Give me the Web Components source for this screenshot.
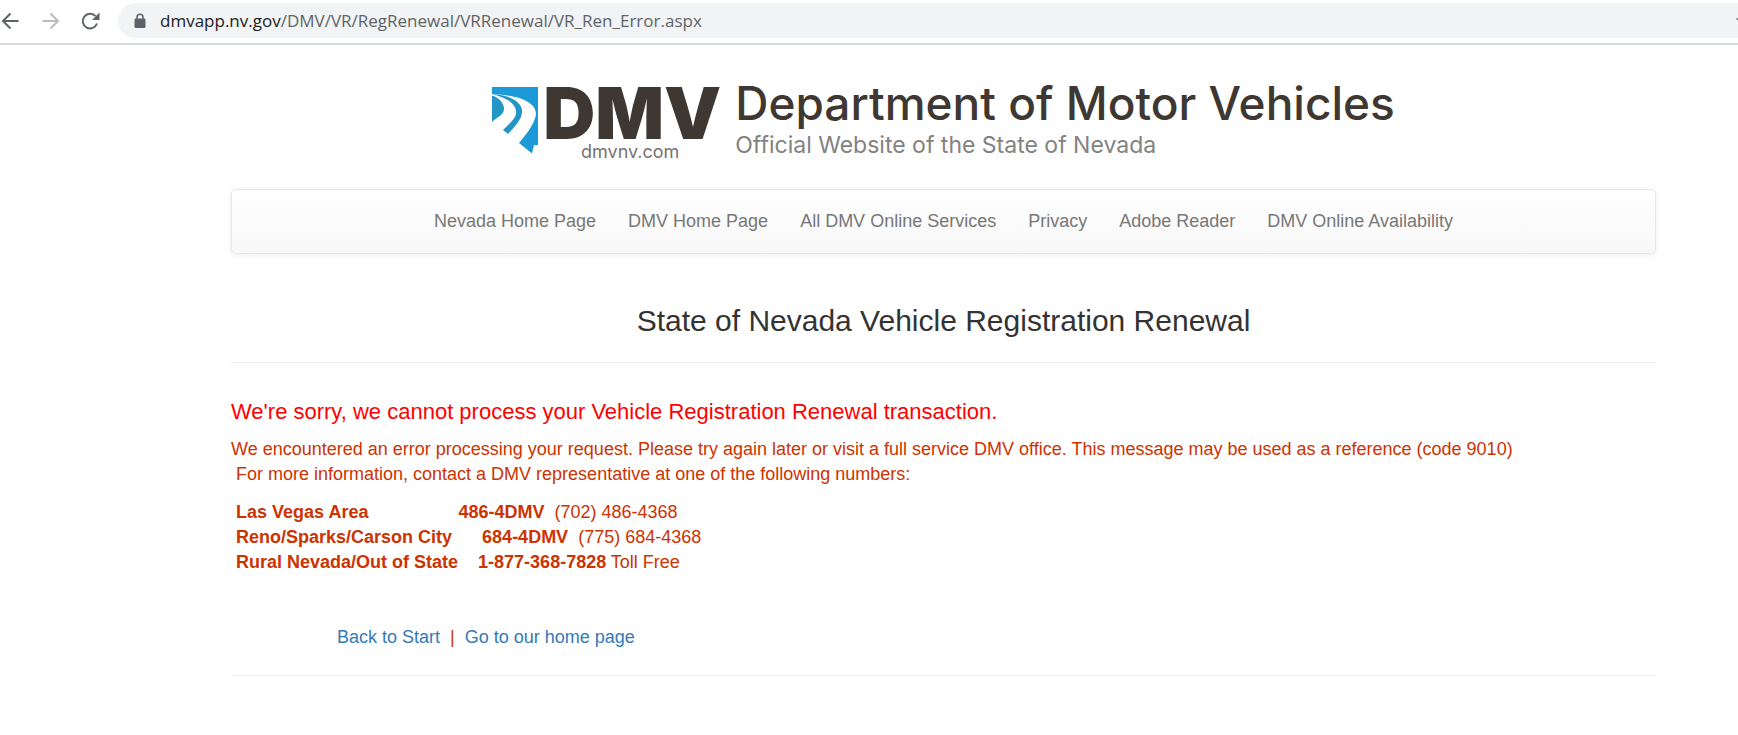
<!DOCTYPE html>
<html lang="en">
<head>
<meta charset="utf-8">
<meta name="viewport" content="width=device-width, initial-scale=1">
<title>State of Nevada Vehicle Registration Renewal</title>
<style>
* {
    box-sizing: border-box;
}

body {
    margin: 0;
    overflow-x: hidden;
    background: #fff;
    color: #333;
    font-family: "Liberation Sans", Arial, sans-serif;
    font-size: 18px;
    line-height: 25px;
}
</style>
</head>
<body>

<browser-bar host="dmvapp.nv.gov" path="/DMV/VR/RegRenewal/VRRenewal/VR_Ren_Error.aspx"></browser-bar>

<page-container>
    <site-brand></site-brand>

    <site-nav>
        <nav-link href="#nevada">Nevada Home Page</nav-link>
        <nav-link href="#dmv">DMV Home Page</nav-link>
        <nav-link href="#services">All DMV Online Services</nav-link>
        <nav-link href="#privacy">Privacy</nav-link>
        <nav-link href="#reader">Adobe Reader</nav-link>
        <nav-link href="#availability">DMV Online Availability</nav-link>
    </site-nav>

    <page-heading>State of Nevada Vehicle Registration Renewal</page-heading>

    <error-message>
        <span slot="title">We're sorry, we cannot process your Vehicle Registration Renewal transaction.</span>
        We encountered an error processing your request. Please try again later or visit a full service DMV office. This message may be used as a reference (code 9010)<br>&nbsp;For more information, contact a DMV representative at one of the following numbers:
    </error-message>

    <phone-list></phone-list>

    <page-links></page-links>
</page-container>

<script>
function define(name, html, setup) {
    const template = document.createElement('template');
    template.innerHTML = html;

    customElements.define(name, class extends HTMLElement {
        constructor() {
            super();
            this.attachShadow({ mode: 'open' });
            this.shadowRoot.appendChild(template.content.cloneNode(true));
        }

        connectedCallback() {
            if (setup) {
                setup(this, this.shadowRoot);
            }
        }
    });
}

define('browser-bar', `
<style>
:host {
    display: flex;
    align-items: center;
    height: 45px;
    padding: 0 0 2px;
    border-bottom: 2px solid #dadce0;
    box-sizing: border-box;
    overflow: hidden;
}

button {
    display: flex;
    flex: none;
    padding: 0;
    border: 0;
    background: none;
    color: #5f6368;
}

.controls {
    display: flex;
    flex: none;
    gap: 20px;
    width: 118px;
}

.forward {
    color: #babcbe;
}

.address {
    display: flex;
    flex: 1;
    align-items: center;
    min-width: 0;
    height: 35px;
    padding-left: 15px;
    border-radius: 18px 0 0 18px;
    background: #f1f3f4;
}

.url {
    flex: 1;
    padding-left: 13px;
    color: #5f6368;
    font: 17px/24px "Open Sans", sans-serif;
    white-space: nowrap;
}

.host {
    color: #202124;
}

.star {
    width: 2px;
    overflow: hidden;
}

svg {
    display: block;
    flex: none;
}
</style>

<div class="controls">
    <button aria-label="Back">
        <svg width="20" height="20" viewBox="0 0 20 20" fill="none" stroke="currentColor" stroke-width="2"><path d="M18.500 10H4M10.500 2.500 3 10l7.500 7.500"/></svg>
    </button>
    <button class="forward" aria-label="Forward">
        <svg width="20" height="20" viewBox="0 0 20 20" fill="none" stroke="currentColor" stroke-width="2"><path d="M2.500 10H18M10.500 2.500 18 10l-7.500 7.500"/></svg>
    </button>
    <button aria-label="Reload">
        <svg width="20" height="20" viewBox="0 0 20 20"><path d="M17 12.500A7.300 7.300 0 1 1 15.500 5.200" fill="none" stroke="currentColor" stroke-width="2"/><path d="M19.500 1.500V9H12z" fill="currentColor"/></svg>
    </button>
</div>
<div class="address">
    <svg width="14" height="16" viewBox="0 0 14 16" fill="#5f6368"><rect x="1.500" y="5.500" width="11" height="9.500" rx="1.200"/><path d="M4 6V4.200a3 3 0 0 1 6 0V6" fill="none" stroke="#5f6368" stroke-width="1.500"/></svg>
    <span class="url"><span class="host"></span><span class="path"></span></span>
    <button class="star" aria-label="Bookmark">
        <svg width="18" height="18" viewBox="0 0 18 18" fill="none" stroke="#5f6368" stroke-width="1.500"><path d="M9 1.500l2.200 5 5.300.500-4 3.600 1.200 5.400L9 13.200 4.300 16l1.200-5.400-4-3.600 5.300-.500z"/></svg>
    </button>
</div>
`, (host, root) => {
    root.querySelector('.host').textContent = host.getAttribute('host');
    root.querySelector('.path').textContent = host.getAttribute('path');
});

define('page-container', `
<style>
:host {
    display: block;
    margin: 0 82px 0 231px;
    padding-top: 34px;
}
</style>
<slot></slot>
`);

define('site-brand', `
<style>
:host {
    display: flex;
    justify-content: center;
    height: 110px;
    color: #3f3832;
    font-family: Inter, sans-serif;
    white-space: nowrap;
}

svg {
    display: block;
    flex: none;
    margin: 8px 5px 0 0;
}

.logo {
    margin-right: 14px;
    padding-top: 4px;
    text-align: center;
}

.name {
    font-size: 72px;
    font-weight: 900;
    line-height: 60px;
}

.site {
    padding-right: 4px;
    color: #77736f;
    font-size: 18px;
    line-height: 18px;
}

.department {
    font-size: 46px;
    font-weight: 500;
    line-height: 48px;
}

.official {
    color: #828282;
    font-size: 23px;
    line-height: 36px;
}
</style>

<svg width="46" height="67" viewBox="0 0 46 67">
    <path fill="#1c9ad8" d="M0 0h46v58h-4l-2 8.500L27 56C34 48 43 36 44 27 44 14 24 8 0 7z"/>
    <path fill="#2296c6" d="M0 7C17 8 29 14 30 23c1 9-8 17-14 24l-5-4c7-7 14-12 13-19C23 15 12 10 0 7zM0 8.500C8 11 12 17 12 22 12 28 5 30 0 35z"/>
</svg>
<div class="logo">
    <div class="name">DMV</div>
    <div class="site">dmvnv.com</div>
</div>
<div>
    <div class="department">Department of Motor Vehicles</div>
    <div class="official">Official Website of the State of Nevada</div>
</div>
`);

define('site-nav', `
<style>
:host {
    display: block;
}

nav {
    display: flex;
    flex-wrap: wrap;
    justify-content: center;
    gap: 0 32px;
    padding: 19px 20px;
    border: 1px solid #e7e7e7;
    border-radius: 5px;
    background: linear-gradient(#fff, #f8f8f8);
    box-shadow: 0 1px 5px rgba(0, 0, 0, .08);
}
</style>
<nav><slot></slot></nav>
`);

define('nav-link', `
<style>
:host {
    display: block;
}

a {
    color: #777;
    text-decoration: none;
}

a:hover {
    color: #333;
}
</style>
<a><slot></slot></a>
`, (host, root) => {
    root.querySelector('a').href = host.getAttribute('href');
});

define('page-heading', `
<style>
:host {
    display: block;
    margin-top: 50px;
    border-bottom: 1px solid #eee;
}

h1 {
    margin: 0;
    padding-bottom: 25px;
    font-size: 30px;
    font-weight: normal;
    line-height: 33px;
    text-align: center;
}
</style>
<h1><slot></slot></h1>
`);

define('error-message', `
<style>
:host {
    display: block;
    margin-top: 36px;
    color: #c30;
}

h2 {
    margin: 0 0 12px;
    color: #f00;
    font-size: 22px;
    font-weight: normal;
    line-height: 26px;
}

p {
    margin: 0;
}
</style>
<h2><slot name="title"></slot></h2>
<p><slot></slot></p>
`);

define('phone-list', `
<style>
:host {
    display: block;
    margin-top: 13px;
    color: #c30;
}

/* columns are padded with spaces */
div {
    white-space: pre;
}
</style>
<div> <b>Las Vegas Area</b>                  <b>486-4DMV</b>  (702) 486-4368</div>
<div> <b>Reno/Sparks/Carson City</b>      <b>684-4DMV</b>  (775) 684-4368</div>
<div> <b>Rural Nevada/Out of State</b>    <b>1-877-368-7828</b> Toll Free</div>
`);

define('page-links', `
<style>
:host {
    display: block;
    margin-top: 50px;
    padding: 0 0 25px 106px;
    border-bottom: 1px solid #eee;
    color: #c30;
}

a {
    color: #337ab7;
    text-decoration: none;
}

a:hover {
    text-decoration: underline;
}
</style>
<a href="#start">Back to Start</a>&nbsp; |&nbsp; <a href="#home">Go to our home page</a>
`);
</script>
</body>
</html>
